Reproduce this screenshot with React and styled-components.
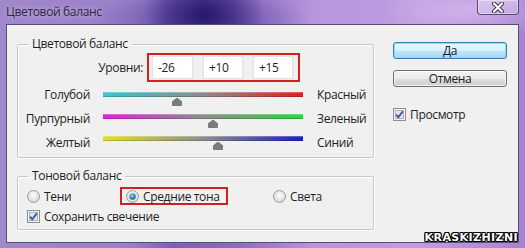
import React from 'react';
import styled, { createGlobalStyle } from 'styled-components';

const Global = createGlobalStyle`
  html, body { margin: 0; padding: 0; }
  body {
    width: 525px; height: 248px; overflow: hidden;
    font-family: "Open Sans", "Noto Sans", sans-serif;
    font-size: 12px; letter-spacing: -0.35px; color: #1e1e1e;
  }
  * { box-sizing: border-box; }
`;

const Frame = styled.div`
  position: relative;
  width: 525px; height: 248px;
  display: flex; flex-direction: column;
  padding: 0 6px 5px 6px;
  background:
    radial-gradient(ellipse 60px 45px at 205px 14px, rgba(35,20,105,0.95), rgba(35,20,105,0) 100%),
    radial-gradient(ellipse 110px 30px at 200px 20px, rgba(70,50,150,0.6), rgba(70,50,150,0) 100%),
    radial-gradient(ellipse 90px 30px at 470px 10px, rgba(230,200,245,0.6), rgba(230,200,245,0) 100%),
    linear-gradient(90deg, #a088cc 0%, #9a80c8 25%, #7a60b8 33%, #8a6cc0 45%, #b696dc 60%, #bd9ee0 80%, #a484d0 100%);
`;

const TitleBar = styled.div`
  height: 24px; flex: none;
  display: flex; justify-content: space-between; align-items: flex-start;
`;

const Title = styled.div`
  padding-top: 3px;
  font-size: 12px;
  color: #2e2840;
  text-shadow: 0 0 6px rgba(255,255,255,0.55);
`;

const CloseButton = styled.div`
  width: 42px; height: 15px;
  border: 1px solid rgba(60,40,90,0.8);
  border-top: none;
  border-radius: 0 0 4px 4px;
  background: linear-gradient(180deg, rgba(255,255,255,0.35), rgba(255,255,255,0.12));
  box-shadow: inset 0 0 0 1px rgba(255,255,255,0.4);
  display: flex; align-items: center; justify-content: center;
`;

const Client = styled.div`
  flex: 1;
  background: #f0f0f0;
  border: 1px solid #5a4c78;
  display: grid;
  grid-template-columns: 357px 1fr;
  column-gap: 19px;
  padding: 12px 0 0 10px;
`;

const LeftColumn = styled.div`
  display: flex; flex-direction: column;
  gap: 11px;
`;

const Group = styled.fieldset`
  margin: 0;
  padding: 0;
  border: 1px solid #c8c8c8;
  box-shadow: inset 1px 1px 0 #fff, 1px 1px 0 #fff;
  border-radius: 2px;
  min-width: 0;
  height: ${p => p.$height}px;
`;

const Legend = styled.legend`
  margin-left: 10px;
  padding: 0 4px 0 4px;
  line-height: 14px;
  font-size: 12px;
`;

const LevelsRow = styled.div`
  display: flex; align-items: center;
  margin-top: 2px;
  gap: 4px;
`;

const LevelsLabel = styled.div`
  width: 125px;
  text-align: right;
`;

const Highlight = styled.div`
  display: flex; align-items: center;
  gap: ${p => p.$gap || 0}px;
  border: 2px solid #d21f1f;
  padding: ${p => p.$pad};
`;

const NumberBox = styled.div`
  width: ${p => p.$w}px; height: 23px;
  background: #fff;
  border: 1px solid #e2e2e2;
  box-shadow: 0 0 0 1px #ececec;
  padding-left: 5px;
  display: flex; align-items: center;
`;

const Sliders = styled.div`
  display: grid;
  grid-template-columns: 72px 200px auto;
  grid-auto-rows: 24px;
  column-gap: 13px;
`;

const SideLabel = styled.div`
  display: flex; align-items: center;
  justify-content: ${p => (p.$right ? 'flex-start' : 'flex-end')};
  margin-left: ${p => (p.$right ? 1 : 0)}px;
`;

const Track = styled.div`
  position: relative;
  align-self: start;
  margin-top: ${p => p.$offset}px;
  height: 5px;
  background: linear-gradient(90deg, ${p => p.$from} 0%, #8d8d8d 50%, ${p => p.$to} 100%);
  box-shadow: inset 0 -1px 0 rgba(0,0,0,0.18), inset 0 1px 0 rgba(255,255,255,0.25);
`;

const ThumbHolder = styled.span`
  position: absolute;
  top: 6px;
  margin-left: -5px;
  line-height: 0;
`;

const RadioRow = styled.div`
  display: grid;
  grid-template-columns: 93px 153px auto;
  align-items: center;
  padding-left: 9px;
  margin-top: 4px;
  height: 18px;
`;

const Option = styled.label`
  display: flex; align-items: center;
  gap: 4px;
  white-space: nowrap;
`;

const OptionBox = styled.div`
  display: flex;
`;

const CheckRow = styled.div`
  padding-left: 9px;
  margin-top: 3px;
`;

const RightColumn = styled.div`
  display: flex; flex-direction: column;
  padding-top: 5px;
  width: 114px;
`;

const Button = styled.div`
  height: 17px;
  display: flex; align-items: center; justify-content: center;
  border-radius: 3px;
  border: 1px solid ${p => (p.$primary ? '#3c7fb1' : '#707070')};
  background: ${p =>
    p.$primary
      ? 'linear-gradient(180deg, #eaf6fd 0%, #d9f0fc 50%, #bee6fd 51%, #a7d9f5 100%)'
      : 'linear-gradient(180deg, #f2f2f2 0%, #ebebeb 50%, #dddddd 51%, #cfcfcf 100%)'};
  box-shadow: inset 0 0 0 1px ${p => (p.$primary ? 'rgba(120,220,255,0.9)' : 'rgba(255,255,255,0.7)')};
  margin-bottom: 11px;
`;

const PreviewRow = styled.div`
  margin-top: 8px;
`;

const Watermark = styled.div`
  position: absolute;
  right: 7px; bottom: 5px;
  font-family: "DejaVu Sans", "Liberation Sans", sans-serif;
  font-weight: bold;
  font-size: 11px;
  line-height: 11px;
  letter-spacing: 0.4px;
  color: #fff;
  text-shadow: 1px 0 0 #000, -1px 0 0 #000, 0 1px 0 #000, 0 -1px 0 #000, 1px 1px 0 #000, -1px -1px 0 #000, 1px -1px 0 #000, -1px 1px 0 #000;
`;

function CheckBox() {
  return (
    <svg width="13" height="13" viewBox="0 0 13 13">
      <rect x="0.5" y="0.5" width="12" height="12" fill="#f4f4f4" stroke="#8e8f8f" />
      <rect x="2.5" y="2.5" width="8" height="8" fill="#dfe6ee" stroke="#aeb3b9" />
      <path d="M3.2 6.6 L5.3 9.2 L9.8 3.4" fill="none" stroke="#3b5998" strokeWidth="1.8" />
    </svg>
  );
}

function Radio({ checked }) {
  return (
    <svg width="13" height="13" viewBox="0 0 13 13">
      <defs>
        <radialGradient id="rg" cx="50%" cy="40%" r="60%">
          <stop offset="0%" stopColor="#ffffff" />
          <stop offset="100%" stopColor="#d6d6d6" />
        </radialGradient>
        <radialGradient id="rd" cx="40%" cy="35%" r="70%">
          <stop offset="0%" stopColor="#8fd6ff" />
          <stop offset="100%" stopColor="#14508c" />
        </radialGradient>
      </defs>
      <circle cx="6.5" cy="6.5" r="6" fill="url(#rg)" stroke="#9a9a9a" />
      {checked && <circle cx="6.5" cy="6.5" r="3.2" fill="url(#rd)" />}
    </svg>
  );
}

function ThumbIcon() {
  return (
    <svg width="10" height="8" viewBox="0 0 10 8">
      <path d="M5 0 L9.5 3.5 L9.5 7.5 L0.5 7.5 L0.5 3.5 Z" fill="#7c7c7c" stroke="#6a6a6a" strokeWidth="0.8" />
    </svg>
  );
}

const sliders = [
  { left: 'Голубой', right: 'Красный', from: '#35c8d2', to: '#e01f1f', value: -26, offset: 10 },
  { left: 'Пурпурный', right: 'Зеленый', from: '#e020e0', to: '#2fd43a', value: 10, offset: 8 },
  { left: 'Желтый', right: 'Синий', from: '#e2e21f', to: '#1f1fbf', value: 15, offset: 6 },
];

export default function App() {
  return (
    <>
      <Global />
      <Frame>
        <TitleBar>
          <Title>Цветовой баланс</Title>
          <CloseButton>
            <svg width="14" height="11" viewBox="0 0 14 11">
              <path d="M3 1.5 L11 9.5 M11 1.5 L3 9.5" stroke="#3a2d55" strokeWidth="4" strokeLinecap="round" />
              <path d="M3 1.5 L11 9.5 M11 1.5 L3 9.5" stroke="#ffffff" strokeWidth="2.2" strokeLinecap="round" />
            </svg>
          </CloseButton>
        </TitleBar>
        <Client>
          <LeftColumn>
            <Group $height={121}>
              <Legend>Цветовой баланс</Legend>
              <LevelsRow>
                <LevelsLabel>Уровни:</LevelsLabel>
                <Highlight $gap={10} $pad="1px 5px 1px 3px">
                  <NumberBox $w={41}>-26</NumberBox>
                  <NumberBox $w={40}>+10</NumberBox>
                  <NumberBox $w={40}>+15</NumberBox>
                </Highlight>
              </LevelsRow>
              <Sliders>
                {sliders.map(s => (
                  <React.Fragment key={s.left}>
                    <SideLabel>{s.left}</SideLabel>
                    <Track $from={s.from} $to={s.to} $offset={s.offset}>
                      <ThumbHolder style={{ left: `${(s.value + 100) / 2}%` }}>
                        <ThumbIcon />
                      </ThumbHolder>
                    </Track>
                    <SideLabel $right>{s.right}</SideLabel>
                  </React.Fragment>
                ))}
              </Sliders>
            </Group>
            <Group $height={61}>
              <Legend>Тоновой баланс</Legend>
              <RadioRow>
                <Option><Radio /> Тени</Option>
                <OptionBox>
                  <Highlight $pad="0 6px 0 4px" style={{ height: '18px' }}>
                    <Option><Radio checked /> Средние тона</Option>
                  </Highlight>
                </OptionBox>
                <Option><Radio /> Света</Option>
              </RadioRow>
              <CheckRow>
                <Option><CheckBox /> Сохранить свечение</Option>
              </CheckRow>
            </Group>
          </LeftColumn>
          <RightColumn>
            <Button $primary>Да</Button>
            <Button>Отмена</Button>
            <PreviewRow>
              <Option><CheckBox /> Просмотр</Option>
            </PreviewRow>
          </RightColumn>
        </Client>
        <Watermark>KRASKIZHIZNI</Watermark>
      </Frame>
    </>
  );
}
